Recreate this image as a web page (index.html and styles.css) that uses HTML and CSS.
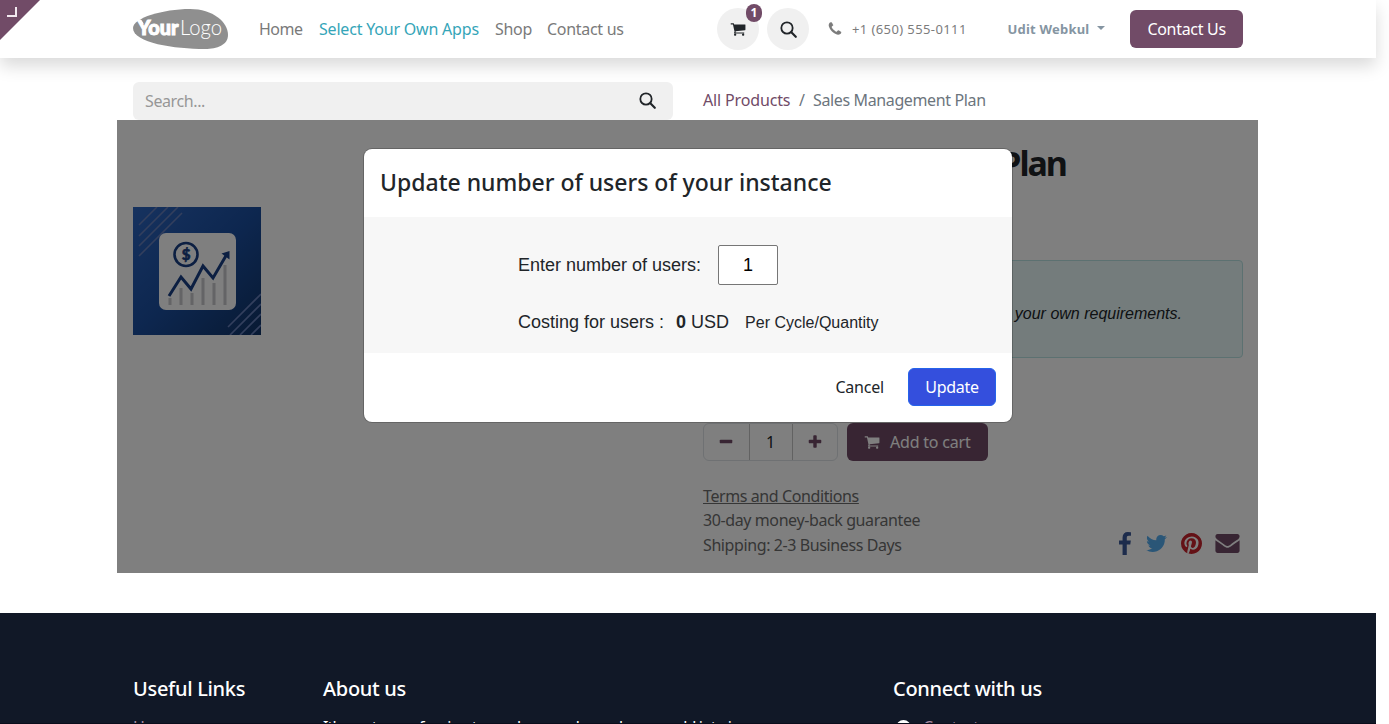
FILE: index.html
```html
<!DOCTYPE html>
<html lang="en">
<head>
<meta charset="utf-8">
<title>Sales Management Plan</title>
<link rel="stylesheet" href="styles.css">
</head>
<body>
<svg class="sprite" aria-hidden="true">
  <symbol id="cart" viewBox="0 0 1792 1792"><path d="M704 1536q0 52-38 90t-90 38-90-38-38-90 38-90 90-38 90 38 38 90zm896 0q0 52-38 90t-90 38-90-38-38-90 38-90 90-38 90 38 38 90zm128-1088v512q0 24-16.500 42.500t-40.500 21.500l-1044 122q13 60 13 70 0 16-24 64h920q26 0 45 19t19 45-19 45-45 19h-1024q-26 0-45-19t-19-45q0-11 8-31.500t16-36 21.500-40 15.500-29.500l-177-823h-204q-26 0-45-19t-19-45 19-45 45-19h256q16 0 28.500 6.500t19.500 15.500 13 24.500 8 26 5.500 29.500 4.500 26h1201q26 0 45 19t19 45z"/></symbol>
  <symbol id="search" viewBox="0 0 18 18"><circle cx="7.400" cy="7.400" r="6" fill="none" stroke="currentColor" stroke-width="1.900"/><path d="M12 12l4.700 4.700" stroke="currentColor" stroke-width="2.300" stroke-linecap="round"/></symbol>
</svg>
<div class="page">
  <header class="header">
    <div class="corner"><svg viewBox="0 0 40 40"><path d="M0 0H40L0 40Z" fill="#714b67"/><path d="M7 16H16V7" fill="none" stroke="#f2e9f0" stroke-width="2"/></svg></div>
    <div class="container nav">
      <svg class="logo" viewBox="0 0 95 40"><path d="M0 19C0 9 30 0 57 0C80 0 95 13 95 26C95 36 84 40 72 40C42 40 0 34 0 19Z" fill="#8f8f8f"/><g fill="#fff" font-family="Lato, sans-serif" font-size="20"><text x="4.500" y="26" font-weight="900" textLength="41" lengthAdjust="spacingAndGlyphs" stroke="#fff" stroke-width="1">Your</text><text x="47" y="26" font-weight="300" font-size="21" textLength="42" lengthAdjust="spacingAndGlyphs">Logo</text></g><path d="M3 11l5 1 2 3" stroke="#fff" stroke-width="1.500" fill="none"/></svg>
      <nav class="links"><a class="l1">Home</a><a class="l2 active">Select Your Own Apps</a><a class="l3">Shop</a><a class="l4">Contact us</a></nav>
      <div class="tools">
        <span class="round cart-btn"><svg width="16" height="16"><use href="#cart"/></svg><b class="badge">1</b></span>
        <span class="round"><svg width="17" height="17"><use href="#search"/></svg></span>
      </div>
      <div class="phone"><svg width="16" height="16" viewBox="0 0 1792 1792"><path d="M1600 1240q0 27-10 70.500t-21 68.500q-21 50-122 106-94 51-186 51-27 0-53-3.500t-57.500-12.500-47-14.500-55.500-20.500-49-18q-98-35-175-83-127-79-264-216t-216-264q-48-77-83-175-3-9-18-49t-20.500-55.500-14.500-47-12.500-57.500-3.500-53q0-92 51-186 56-101 106-122 25-11 68.500-21t70.500-10q14 0 21 3 18 6 53 76 11 19 30 54t35 63.500 31 53.500q3 4 17.500 25t21.500 35.500 7 28.500q0 20-28.500 50t-62 55-62 53-28.500 46q0 9 5 22.500t8.500 20.500 14 24 11.500 19q76 137 174 235t235 174q2 1 19 11.500t24 14 20.500 8.500 22.500 5q18 0 46-28.500t53-62 55-62 50-28.500q14 0 28.500 7t35.500 21.500 25 17.500q25 15 53.500 31t63.500 35 54 30q70 35 76 53 3 7 3 21z"/></svg><span>+1 (650) 555-0111</span></div>
      <div class="user"><span>Udit Webkul</span><i class="caret"></i></div>
      <button class="contact">Contact Us</button>
    </div>
  </header>
  <div class="container topbar">
    <div class="searchbox"><span>Search...</span><svg width="17" height="17"><use href="#search"/></svg></div>
    <div class="crumbs"><a>All Products</a><i>/</i><span>Sales Management Plan</span></div>
  </div>
  <main class="product">
    <svg class="thumb" viewBox="0 0 128 128">
      <defs><linearGradient id="bg" x1="0" y1="0" x2="1" y2="1"><stop offset="0" stop-color="#2d65bf"/><stop offset=".5" stop-color="#1b4e9f"/><stop offset="1" stop-color="#113467"/></linearGradient></defs>
      <rect width="128" height="128" fill="url(#bg)"/>
      <path d="M6 18L24 0M6 29L35 0M6 39L45 0M6 49L49 6M95 120L128 87M97 128L128 97M107 128L128 107M118 128L128 118" stroke="#667fba" stroke-width="1.600"/>
      <rect x="26" y="26" width="77" height="77" rx="7" fill="#fff"/>
      <path d="M37 91v7M48 81v17M59 86v12M70 71v27M81 76v22M92 58v40" stroke="#c8c8cc" stroke-width="3"/>
      <path d="M36 89L48 70L58 82L70 59L80 71L94 47" fill="none" stroke="#183e84" stroke-width="3"/><path d="M88.500 46.500L96.500 44V52.500Z" fill="#183e84"/>
      <circle cx="53" cy="47.500" r="11.500" fill="none" stroke="#183e84" stroke-width="2.600"/><text x="53" y="53" text-anchor="middle" font-family="Lato" font-weight="900" font-size="15" fill="#183e84" stroke="#183e84" stroke-width=".6">$</text>
    </svg>
    <section class="details">
      <h1>Sales Management Plan</h1>
      <div class="note">your own requirements.</div>
      <div class="buy">
        <div class="qty"><span><svg width="16" height="16" viewBox="0 0 1792 1792"><path d="M1600 736v192q0 40-28 68t-68 28h-1216q-40 0-68-28t-28-68v-192q0-40 28-68t68-28h1216q40 0 68 28t28 68z"/></svg></span><span class="num">1</span><span><svg width="16" height="16" viewBox="0 0 1792 1792"><path d="M1600 736v192q0 40-28 68t-68 28h-416v416q0 40-28 68t-68 28h-192q-40 0-68-28t-28-68v-416h-416q-40 0-68-28t-28-68v-192q0-40 28-68t68-28h416v-416q0-40 28-68t68-28h192q40 0 68 28t28 68v416h416q40 0 68 28t28 68z"/></svg></span></div>
        <button class="add"><svg width="16" height="16"><use href="#cart"/></svg><span>Add to cart</span></button>
      </div>
      <div class="bottom">
        <p class="terms"><u class="t1">Terms and Conditions</u><span class="t2">30-day money-back guarantee</span><span class="t3">Shipping: 2-3 Business Days</span></p>
        <div class="social">
          <svg class="fb" viewBox="479 0 864 1664" width="12" height="23"><path fill="#3b5998" d="M1343 12v264h-157q-86 0-116 36t-30 108v189h293l-39 296h-254v759h-306v-759h-255v-296h255v-218q0-186 104-288.500t277-102.500q147 0 228 12z"/></svg>
          <svg class="tw" viewBox="108 256 1576 1280" width="21" height="17"><path fill="#55acee" d="M1684 408q-67 98-162 167 1 14 1 42 0 130-38 259.500t-115.500 248.500-184.500 210.500-258 146-323 54.500q-271 0-496-145 35 4 78 4 225 0 401-138-105-2-188-64.500t-114-159.500q33 5 61 5 43 0 85-11-112-23-185.500-111.500t-73.500-205.500v-4q68 38 146 41-66-44-105-115t-39-154q0-88 44-163 121 149 294.500 238.500t371.500 99.500q-8-38-8-74 0-134 94.500-228.500t228.500-94.500q140 0 236 102 109-21 205-78-37 115-142 178 93-10 186-50z"/></svg>
          <svg class="pi" viewBox="128 128 1536 1536" width="21" height="21"><path fill="#c8232c" d="M1664 896q0 209-103 385.500t-279.500 279.500-385.500 103q-111 0-218-32 59-93 78-164 9-34 54-211 20 39 73 67.500t114 28.500q121 0 216-68.500t147-188.500 52-270q0-114-59.500-214t-172.500-163-255-63q-105 0-196 29t-154.500 77-109 110.500-67 129.500-21.500 134q0 104 40 183t117 111q30 12 38-20 2-7 8-31t8-30q6-23-11-43-51-61-51-151 0-151 104.500-259.500t273.500-108.500q151 0 235.500 82t84.500 213q0 170-68.500 289t-175.500 119q-61 0-98-43.500t-23-104.500q8-35 26.500-93.500t30-103 11.500-75.500q0-50-27-83t-77-33q-62 0-105 57t-43 142q0 73 25 122l-99 418q-17 70-13 177-206-91-333-281t-127-423q0-209 103-385.500t279.500-279.500 385.500-103 385.500 103 279.500 279.500 103 385.500z"/></svg>
          <svg class="em" viewBox="0 256 1792 1408" width="25" height="19"><path fill="#714b67" d="M1792 710v794q0 66-47 113t-113 47h-1472q-66 0-113-47t-47-113v-794q44 49 101 87 362 246 497 345 57 42 92.500 65.500t94.500 48 110 24.500h2q51 0 110-24.500t94.500-48 92.500-65.500q170-123 498-345 57-39 100-87zm0-294q0 79-49 151t-122 123q-376 261-468 325-10 7-42.500 31t-54 38.500-52 32.500-57.500 27-50 9h-2q-23 0-50-9t-57.500-27-52-32.500-54-38.500-42.500-31q-91-64-262-182.500t-205-142.500q-62-42-117-115.500t-55-136.500q0-78 41.500-130t118.500-52h1472q65 0 112.500 47t47.500 113z"/></svg>
        </div>
      </div>
    </section>
    <div class="overlay">
      <div class="modal">
        <h2><span>Update number of users of your instance</span></h2>
        <div class="modal-body">
          <div class="row"><label>Enter number of users:</label><span class="input">1</span></div>
          <div class="row cost"><span>Costing for users :</span><span class="usd"><b>0</b> USD</span><small>Per Cycle/Quantity</small></div>
        </div>
        <div class="modal-foot"><span class="cancel">Cancel</span><button class="update">Update</button></div>
      </div>
    </div>
  </main>
  <footer class="footer">
    <div class="container cols">
      <div class="c1"><h5>Useful Links</h5><p class="dim">Home</p></div>
      <div class="c2"><h5>About us</h5><p>It's our team of caring to reach a wonder and new world into in</p></div>
      <div class="c3"><h5>Connect with us</h5><p class="dim"><i class="dot"></i>Contact us</p></div>
    </div>
  </footer>
</div>
</body>
</html>
```
FILE: styles.css
```css
* { box-sizing: border-box; }
body { margin: 0; background: #fff; font: 16px/24px "Noto Sans", sans-serif; color: #212529; overflow: hidden; }
h1, h2, h5, p { margin: 0; }
i { font-style: normal; }
button { border: 0; font: inherit; padding: 0; white-space: nowrap; }
svg { display: block; flex: none; fill: currentColor; }
span, a, u, h1, h2, h5, p { white-space: nowrap; }
.sprite { position: absolute; width: 0; height: 0; }
.page { width: 1376px; height: 724px; display: flex; flex-direction: column; }
.container { width: 1110px; margin-left: 133px; }

.header { height: 58px; flex: none; background: #fff; box-shadow: 0 8px 16px rgba(0, 0, 0, .15); position: relative; }
.corner { position: absolute; left: 0; top: 0; width: 40px; height: 40px; }
.nav { height: 58px; display: flex; align-items: center; }
.logo { width: 95px; height: 40px; }
.links { display: flex; margin-left: 31px; color: #7a7a7a; padding-bottom: 1px; }
.l1 { width: 60px; letter-spacing: -.5px; }
.l2 { width: 176px; letter-spacing: -.2px; }
.l3 { width: 52px; letter-spacing: -.3px; }
.l4 { width: 80px; letter-spacing: -.3px; }
.active { color: #35a5b8; }
.tools { display: flex; gap: 8px; margin-left: 90px; }
.round { width: 42px; height: 42px; border-radius: 50%; background: #f0f0f0; display: flex; align-items: center; justify-content: center; position: relative; }
.badge { position: absolute; left: 29px; top: -4px; width: 16px; height: 18px; border-radius: 8px; background: #714b67; color: #fff; font-size: 12px; line-height: 18px; text-align: center; }
.phone { display: flex; align-items: center; color: #7c7c7c; font-size: 13px; margin-left: 18px; width: 181px; letter-spacing: .4px; }
.phone span { margin-left: 9px; }
.user { display: flex; align-items: center; width: 123px; color: #8595a2; font-size: 13px; font-weight: 700; letter-spacing: .2px; }
.caret { border: 4.500px solid transparent; border-top-color: #8595a2; border-bottom: 0; margin: -3px 0 0 8px; }
.contact { width: 113px; height: 38px; border-radius: 6px; background: #714b67; color: #fff; letter-spacing: -.3px; }

.topbar { height: 62px; flex: none; padding-top: 24px; display: flex; position: relative; }
.searchbox { width: 540px; height: 38px; background: #f0f0f0; border-radius: 6px; display: flex; align-items: center; justify-content: space-between; padding: 0 17px 1px 12px; }
.searchbox span { color: #979797; letter-spacing: -.4px; }
.crumbs { margin-left: 30px; line-height: 37px; color: #6c757d; display: flex; }
.crumbs a { color: #714b67; width: 96px; letter-spacing: -.15px; }
.crumbs i { width: 14px; }
.crumbs span { letter-spacing: -.37px; }

.product { position: relative; width: 1141px; height: 453px; flex: none; margin-left: 117px; padding: 0 15px 0 16px; display: flex; }
.thumb { width: 128px; height: 128px; margin-top: 86.500px; }
.details { width: 540px; margin-left: 442px; }
h1 { font-size: 34px; line-height: 42px; font-weight: 700; padding-top: 22px; height: 140px; letter-spacing: -2px; }
.note { height: 98px; border: 1px solid #b8e2e2; border-radius: 4px; background: #e8f9f8; padding: 41px 60px 0 0; text-align: right; font: italic 16px/24px "Liberation Sans", sans-serif; }
.buy { display: flex; gap: 9px; margin-top: 65px; }
.qty { width: 135px; height: 38px; display: flex; border: 1px solid #dee2e6; border-radius: 6px; color: #714b67; }
.qty span { flex: 1; display: flex; align-items: center; justify-content: center; }
.qty .num { flex: none; width: 44px; border: solid #c5c5c5; border-width: 0 1px; color: #212529; }
.add { width: 141px; height: 38px; border-radius: 6px; background: #714b67; color: #fff; display: flex; align-items: center; padding-left: 17px; gap: 10px; letter-spacing: -.2px; }
.bottom { display: flex; justify-content: space-between; margin-top: 23px; }
.terms { display: flex; flex-direction: column; align-items: flex-start; line-height: 24.300px; color: #6c6c6c; letter-spacing: -.4px; }
.social { display: flex; align-items: center; padding: 47px 3px 0 0; }
.tw { margin-left: 15px; } .pi { margin-left: 14px; } .em { margin-left: 13px; }

.overlay { position: absolute; inset: 0; background: rgba(0, 0, 0, .5); }
.modal { width: 648px; height: 273px; margin: 28.500px 0 0 247px; background: #fff; border-radius: 8px; box-shadow: 0 0 0 1px rgba(0, 0, 0, .2); overflow: hidden; }
h2 { height: 68px; padding-left: 16px; font-size: 23px; font-weight: 500; line-height: 67px; }
.modal-body { height: 136px; background: #f7f7f7; padding: 28px 0 0 154px; font-family: "Liberation Sans", Arial, sans-serif; font-size: 18px; }
.row { display: flex; align-items: center; }
.input { width: 60px; height: 40px; margin-left: 17px; border: 1px solid #767676; border-radius: 2px; background: #fff; color: #000; display: flex; align-items: center; justify-content: center; }
.cost { margin-top: 25px; align-items: baseline; }
.usd { margin-left: 12px; }
.cost small { font-size: 16px; margin-left: 16px; }
.modal-foot { height: 69px; display: flex; align-items: center; justify-content: flex-end; padding-right: 16px; }
.cancel { margin-right: 24px; letter-spacing: -.2px; }
.update { width: 88px; height: 38px; border-radius: 6px; background: #344fdd; border: 1px solid #2563eb; color: #fff; letter-spacing: -.3px; }

.footer { height: 111px; margin-top: 40px; flex: none; background: #111827; overflow: hidden; color: #fff; border-bottom: 1px solid #0a0d1b; }
.cols { display: flex; padding-top: 63px; }
.c1 { width: 190px; } .c2 { width: 570px; }
h5 { font-size: 20px; font-weight: 500; line-height: 26px; letter-spacing: -.3px; }
.footer p { margin-top: 13px; display: flex; align-items: center; letter-spacing: -.9px; }
.footer .dim { color: #a98ba2; letter-spacing: -.3px; }
.dot { width: 15px; height: 15px; background: #fff; border-radius: 50%; margin: 0 12px 0 3px; }
```
